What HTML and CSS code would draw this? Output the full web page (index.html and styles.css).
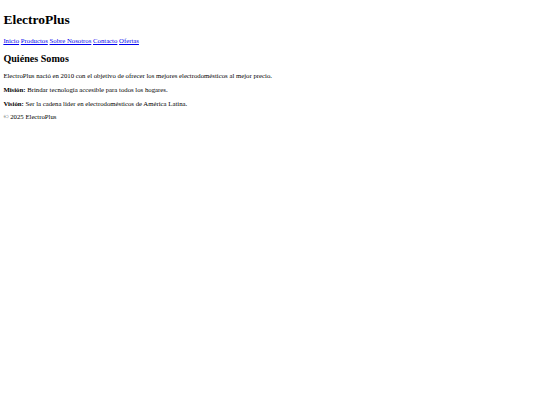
FILE: index.html
```html
<!DOCTYPE html>
<html lang="es">
<head>
<meta charset="utf-8">
<title>ElectroPlus</title>
<link rel="stylesheet" href="styles.css">
</head>
<body>
<header>
<h1>ElectroPlus</h1>
<nav>
<a href="#">Inicio</a>
<a href="#">Productos</a>
<a href="#">Sobre Nosotros</a>
<a href="#">Contacto</a>
<a href="#">Ofertas</a>
</nav>
</header>
<main>
<section>
<h2>Quiénes Somos</h2>
<p>ElectroPlus nació en 2010 con el objetivo de ofrecer los mejores electrodomésticos al mejor precio.</p>
<p><strong>Misión:</strong> Brindar tecnología accesible para todos los hogares.</p>
<p><strong>Visión:</strong> Ser la cadena líder en electrodomésticos de América Latina.</p>
</section>
</main>
<footer>
<p>© 2025 ElectroPlus</p>
</footer>
</body>
</html>
```
FILE: styles.css
```css
html {
  font-size: 6.75px;
  background: #fff;
}
body {
  margin: 3.375px;
  font-family: "Liberation Serif", "Times New Roman", serif;
  font-size: 6.75px;
  color: #000;
}
a {
  color: #0000ee;
}
```
